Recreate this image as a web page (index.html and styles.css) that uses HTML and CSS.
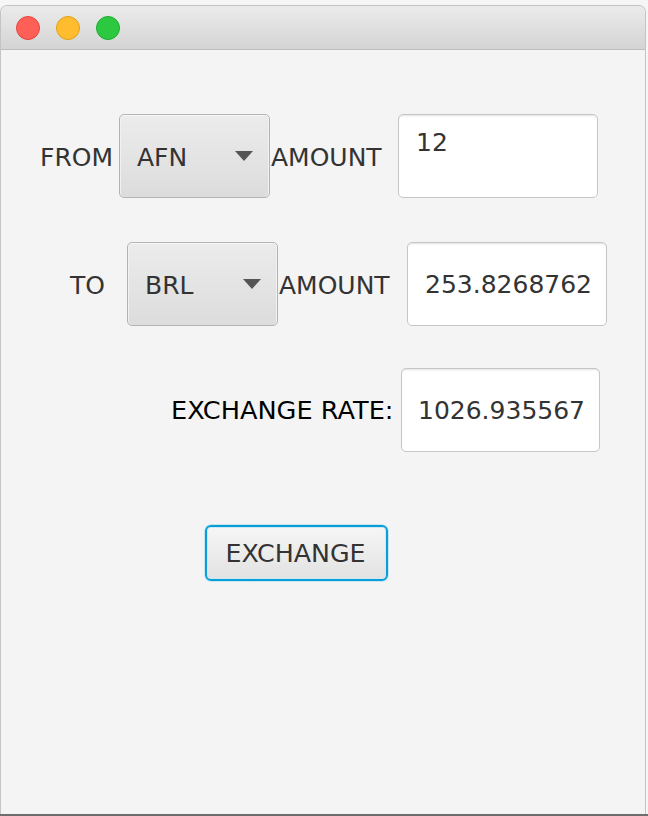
FILE: index.html
```html
<!DOCTYPE html>
<html>
<head>
<meta charset="utf-8">
<link rel="stylesheet" href="styles.css">
</head>
<body>
<div class="window">
  <div class="titlebar">
    <span class="light red"></span>
    <span class="light yellow"></span>
    <span class="light green"></span>
  </div>
  <div class="content">
    <div class="row row-from">
      <span class="label label-from">FROM</span>
      <div class="combo">
        <span class="combo-text">AFN</span>
        <span class="arrow"></span>
      </div>
      <span class="label label-amount1">AMOUNT</span>
      <div class="field field-top">12</div>
    </div>
    <div class="row row-to">
      <span class="label label-to">TO</span>
      <div class="combo">
        <span class="combo-text">BRL</span>
        <span class="arrow"></span>
      </div>
      <span class="label label-amount2">AMOUNT</span>
      <div class="field field-center">253.8268762</div>
    </div>
    <div class="row row-rate">
      <span class="label label-rate">EXCHANGE RATE:</span>
      <div class="field field-center field-rate">1026.935567</div>
    </div>
    <div class="row row-button">
      <button class="btn">EXCHANGE</button>
    </div>
  </div>
</div>
<div class="desk-edge"></div>
</body>
</html>
```

FILE: styles.css
```css
html, body {
  margin: 0;
  padding: 0;
}
body {
  background: #f6f6f6;
  width: 648px;
  height: 816px;
  overflow: hidden;
  padding-top: 5px;
  box-sizing: border-box;
  font-family: "DejaVu Sans", Verdana, sans-serif;
}
.window {
  width: 646px;
  height: 809px;
  box-sizing: border-box;
  border: 1px solid #c4c4c4;
  border-bottom: none;
  border-radius: 7px 7px 0 0;
  background: #f4f4f4;
  overflow: hidden;
  display: flex;
  flex-direction: column;
}
.titlebar {
  height: 44px;
  box-sizing: border-box;
  border-bottom: 1px solid #bdbdbd;
  background: linear-gradient(#ebebeb, #d4d4d4);
  display: flex;
  align-items: center;
  padding-left: 15px;
  gap: 16px;
  padding-top: 1px;
}
.light {
  width: 24px;
  height: 24px;
  border-radius: 50%;
  box-sizing: border-box;
}
.red { background: #fe5f57; border: 1px solid #e2463f; }
.yellow { background: #febc2e; border: 1px solid #e1a116; }
.green { background: #2bc840; border: 1px solid #1eab2f; }

.content {
  display: flex;
  flex-direction: column;
  padding-top: 64px;
  font-size: 25px;
  color: #333333;
}
.row {
  display: flex;
  align-items: center;
  height: 83px;
}
.row-from { padding-left: 39px; }
.row-to { padding-left: 69px; margin-top: 45px; }
.row-rate { padding-left: 170px; margin-top: 43px; }
.row-button { padding-left: 204px; margin-top: 74px; height: 55px; }

.label { white-space: nowrap; padding-top: 3px; }
.label-from { width: 79px; }
.label-amount1 { width: 127px; padding-left: 1px; }
.label-to { width: 57px; }
.label-amount2 { width: 128px; padding-left: 1px; }
.label-rate { width: 230px; color: #000; font-size: 25.6px; padding-top: 0; }

.combo {
  width: 151px;
  height: 84px;
  box-sizing: border-box;
  border: 1px solid #b3b3b3;
  border-radius: 5px;
  background: linear-gradient(#ececec, #dcdcdc);
  box-shadow: inset 0 1px 0 #f7f7f7, inset 1px 0 0 #f1f1f1, inset -1px 0 0 #f1f1f1;
  display: flex;
  align-items: center;
  justify-content: space-between;
  padding: 3px 16px 0 17px;
}
.combo-text { color: #333; }
.arrow {
  width: 0;
  height: 0;
  border-left: 9px solid transparent;
  border-right: 9px solid transparent;
  border-top: 10px solid #555;
  margin-top: -2px;
}

.field {
  width: 200px;
  height: 84px;
  box-sizing: border-box;
  border: 1px solid #c6c6c6;
  border-radius: 5px;
  background: #fff;
  box-shadow: inset 0 2px 2px -1px rgba(0,0,0,0.12);
  color: #333;
}
.field-top {
  padding: 13px 0 0 17px;
  line-height: 30px;
}
.field-center {
  display: flex;
  align-items: center;
  padding-left: 17px;
  padding-top: 2px;
}
.field-rate { width: 199px; padding-left: 16px; }

.btn {
  width: 183px;
  height: 56px;
  box-sizing: border-box;
  font-family: "DejaVu Sans", Verdana, sans-serif;
  font-size: 25.3px;
  color: #333;
  border: 2px solid #0a9ed6;
  border-radius: 6px;
  background: linear-gradient(#f6f6f6, #e2e2e2);
  box-shadow: 0 0 0 1px #c6e6f4, inset 0 0 0 1px #cfe8f3;
  padding: 2px 2px 0 0;
  display: flex;
  align-items: center;
  justify-content: center;
}

.desk-edge {
  height: 2px;
  background: #6d6d6d;
}
```
